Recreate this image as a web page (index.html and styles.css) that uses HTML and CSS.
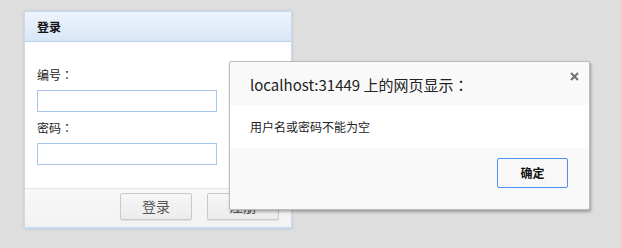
FILE: index.html
```html
<!DOCTYPE html>
<html>
<head>
<meta charset="utf-8">
<link rel="stylesheet" href="styles.css">
</head>
<body>
<div class="panel">
  <div class="panel-head">登录</div>
  <div class="panel-body">
    <div class="label">编号<span class="colon">：</span></div>
    <div class="input"></div>
    <div class="label second">密码<span class="colon">：</span></div>
    <div class="input"></div>
  </div>
  <div class="panel-foot">
    <div class="btn">登录</div>
    <div class="btn">注册</div>
  </div>
</div>

<div class="dialog">
  <div class="dlg-head">
    <span class="dlg-title">localhost:31449 上的网页显示<span class="colon">：</span></span>
    <svg class="close" width="9" height="9" viewBox="0 0 9 9"><path d="M1 1L8 8M8 1L1 8" stroke="#6f6f6f" stroke-width="2"/></svg>
  </div>
  <div class="dlg-msg">用户名或密码不能为空</div>
  <div class="dlg-foot">
    <div class="ok">确定</div>
  </div>
</div>
</body>
</html>
```

FILE: styles.css
```css
html, body {
  margin: 0;
  padding: 0;
}
body {
  background: #dedede;
  font-family: "Noto Sans CJK SC", "Liberation Sans", sans-serif;
  font-size: 12px;
  color: #222;
  padding: 11px 0 0 24px;
  height: 248px;
  box-sizing: border-box;
  position: relative;
  overflow: hidden;
}
.colon {
  font-family: "Noto Sans CJK TC", sans-serif;
}
.panel {
  width: 268px;
  height: 218px;
  box-sizing: border-box;
  background: #fff;
  border: 1px solid #c7daf2;
  border-bottom: 2px solid #c5d9f1;
  box-shadow: 0 0 3px rgba(0,0,0,0.12);
  display: flex;
  flex-direction: column;
}
.panel-head {
  height: 29px;
  line-height: 29px;
  border-bottom: 1px solid #b9d1ef;
  background: linear-gradient(#eef4fc, #d8e6f7);
  padding-left: 12px;
  font-weight: bold;
  color: #111;
}
.panel-body {
  padding: 25px 12px 0;
  flex: 1;
}
.label {
  height: 16px;
  line-height: 16px;
  margin-bottom: 7px;
  color: #222;
}
.label.second {
  margin-top: 8px;
}
.input {
  width: 180px;
  height: 22px;
  box-sizing: border-box;
  border: 1px solid #a8c7ee;
  background: #fff;
}
.panel-foot {
  height: 39px;
  box-sizing: border-box;
  border-top: 1px solid #e6e6e6;
  background: linear-gradient(#f8f8f8, #f2f2f2);
  display: flex;
  justify-content: flex-end;
  align-items: flex-start;
  gap: 15px;
  padding: 4px 12px 0 0;
}
.btn {
  width: 72px;
  height: 27px;
  box-sizing: border-box;
  border: 1px solid #c9c9c9;
  border-radius: 2px;
  background: linear-gradient(#f6f6f6, #ececec);
  box-shadow: 0 1px 1px rgba(0,0,0,0.08);
  text-align: center;
  line-height: 25px;
  font-size: 14px;
  color: #555;
}
.dialog {
  position: absolute;
  left: 229px;
  top: 61px;
  width: 361px;
  height: 149px;
  box-sizing: border-box;
  border: 1px solid #bcbcbc;
  border-radius: 2px;
  background: #f9f9f9;
  box-shadow: 1px 2px 3px rgba(0,0,0,0.3);
  display: flex;
  flex-direction: column;
}
.dlg-head {
  height: 43px;
  position: relative;
  padding-left: 20px;
  display: flex;
  align-items: center;
}
.dlg-title {
  font-size: 15px;
  color: #222;
  padding-top: 2px;
}
.close {
  position: absolute;
  right: 10px;
  top: 10px;
}
.dlg-msg {
  height: 43px;
  line-height: 43px;
  background: #fff;
  padding-left: 20px;
  color: #222;
}
.dlg-foot {
  flex: 1;
  display: flex;
  justify-content: flex-end;
  align-items: flex-start;
  padding: 10px 21px 0 0;
}
.ok {
  width: 71px;
  height: 30px;
  box-sizing: border-box;
  border: 1px solid #4d8ef0;
  border-radius: 2px;
  background: #f8f8f8;
  text-align: center;
  line-height: 28px;
  font-weight: bold;
  color: #111;
}
```
